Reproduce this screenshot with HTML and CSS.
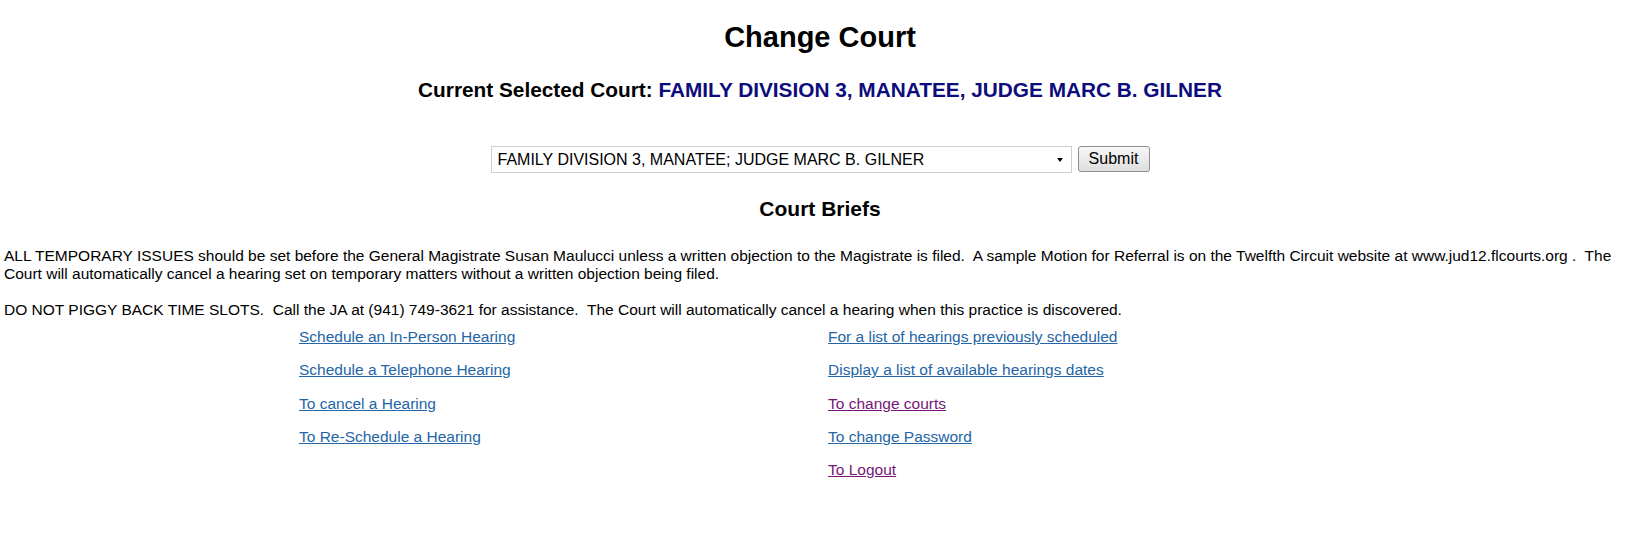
FILE: index.html
```html
<!DOCTYPE html>
<html>
<head>
<meta charset="utf-8">
<title>Change Court</title>
<link rel="stylesheet" href="styles.css">
</head>
<body>
<div class="page">
  <h1 class="title">Change Court</h1>
  <h2 class="current">Current Selected Court: <span class="court-name">FAMILY DIVISION 3, MANATEE, JUDGE MARC B. GILNER</span></h2>
  <form class="picker">
    <div class="select-wrap">
      <select class="court-select">
        <option>FAMILY DIVISION 3, MANATEE; JUDGE MARC B. GILNER</option>
      </select>
    </div>
    <button type="button" class="submit">Submit</button>
  </form>
  <h2 class="briefs">Court Briefs</h2>
  <p class="brief">ALL TEMPORARY ISSUES should be set before the General Magistrate Susan Maulucci unless a written objection to the Magistrate is filed.&nbsp; A sample Motion for Referral is on the Twelfth Circuit website at www.jud12.flcourts.org .&nbsp; The Court will automatically cancel a hearing set on temporary matters without a written objection being filed.</p>
  <p class="brief brief-last">DO NOT PIGGY BACK TIME SLOTS.&nbsp; Call the JA at (941) 749-3621 for assistance.&nbsp; The Court will automatically cancel a hearing when this practice is discovered.</p>
  <div class="links">
    <div class="link-col">
      <a href="#" class="link">Schedule an In-Person Hearing</a>
      <a href="#" class="link">Schedule a Telephone Hearing</a>
      <a href="#" class="link">To cancel a Hearing</a>
      <a href="#" class="link">To Re-Schedule a Hearing</a>
    </div>
    <div class="link-col">
      <a href="#" class="link">For a list of hearings previously scheduled</a>
      <a href="#" class="link">Display a list of available hearings dates</a>
      <a href="#" class="link visited">To change courts</a>
      <a href="#" class="link">To change Password</a>
      <a href="#" class="link visited">To Logout</a>
    </div>
  </div>
</div>
</body>
</html>
```
FILE: styles.css
```css
html, body {
  margin: 0;
  padding: 0;
  background: #ffffff;
}
body {
  font-family: "Liberation Sans", Arial, sans-serif;
  font-size: 15.5px;
  line-height: 18px;
  color: #000000;
}
.page {
  padding: 21px 0 0 4px;
}
.title {
  margin: 0;
  padding-left: 5px;
  text-align: center;
  font-size: 29px;
  line-height: 32px;
  font-weight: bold;
}
.current {
  margin: 25px 0 0 0;
  padding-left: 5px;
  text-align: center;
  font-size: 20.8px;
  line-height: 24px;
  font-weight: bold;
}
.court-name {
  color: #0c0c7c;
}
.picker {
  margin: 44px 0 0 0;
  padding-left: 5px;
  display: flex;
  justify-content: center;
  align-items: flex-start;
  gap: 6px;
}
.select-wrap {
  position: relative;
  width: 581px;
  height: 27px;
}
.select-wrap::after {
  content: "";
  position: absolute;
  right: 9px;
  top: 12px;
  border-left: 3.5px solid transparent;
  border-right: 3.5px solid transparent;
  border-top: 4px solid #000;
  pointer-events: none;
}
.court-select {
  -webkit-appearance: none;
  appearance: none;
  box-sizing: border-box;
  width: 100%;
  height: 27px;
  margin: 0;
  padding: 0 20px 0 6px;
  border: 1px solid #cfcfcf;
  border-radius: 0;
  background: #ffffff;
  font-family: "Liberation Sans", Arial, sans-serif;
  font-size: 16px;
  color: #000;
}
.submit {
  box-sizing: border-box;
  width: 72px;
  height: 26px;
  margin: 0;
  padding: 0;
  border: 1px solid #8e8e8e;
  border-radius: 3px;
  background: linear-gradient(#f7f7f7, #dedede);
  font-family: "Liberation Sans", Arial, sans-serif;
  font-size: 16px;
  color: #000;
}
.briefs {
  margin: 24px 0 0 0;
  padding-left: 5px;
  text-align: center;
  font-size: 21px;
  line-height: 24px;
  font-weight: bold;
}
.brief {
  margin: 26px 0 0 0;
}
.brief + .brief {
  margin-top: 18px;
}
.links {
  display: grid;
  grid-template-columns: 529px auto;
  margin: 9px 0 0 295px;
}
.link-col {
  display: flex;
  flex-direction: column;
  align-items: flex-start;
  gap: 15.33px;
}
.link {
  color: #2365a6;
  text-decoration: underline;
  font-size: 15.5px;
  line-height: 18px;
}
.link.visited {
  color: #761776;
}
```
